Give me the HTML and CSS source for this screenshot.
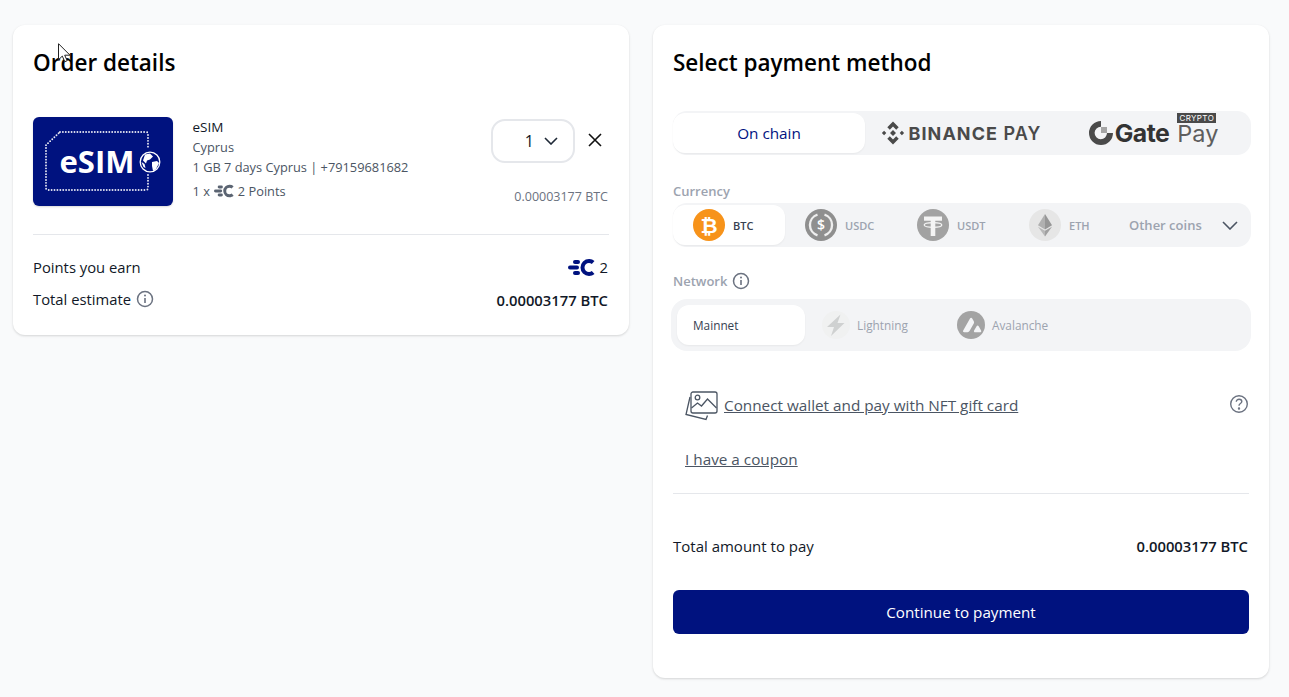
FILE: index.html
```html
<!DOCTYPE html>
<html lang="en">
<head>
<meta charset="utf-8">
<title>Checkout</title>
<link rel="stylesheet" href="styles.css">
</head>
<body>
<svg class="cursor" width="13" height="20" viewBox="0 0 13 20"><path d="M.5.7v16l3.8-3.6 2.5 5.6 2.4-1-2.500-5.500h5.300z" fill="#fff" stroke="#222" stroke-width="1"/></svg>
<main class="page">
  <section class="card order">
    <h2 class="title">Order details</h2>
    <div class="item">
      <div class="thumb">
        <svg width="140" height="89" viewBox="0 0 140 89">
          <path d="M27 15H113Q115 15 115 17V32M115 58V71Q115 73 113 73H15Q13 73 13 71V28L27 15" fill="none" stroke="#fff" stroke-width="1.900" stroke-linecap="round" stroke-dasharray="0 2.900" opacity=".9"/>
          <text x="26.500" y="56" class="esim-text">eSIM</text>
          <circle cx="117" cy="45" r="9.800" fill="none" stroke="#fff" stroke-width="1.300"/>
          <path d="M112 37.500l5-1 3 3-3 3-3 1-1 3-3-3zM119 45l5-1 2 2-3 6-3 2-1-5zM108.500 45l3 2 1 4-2-1z" fill="#fff"/>
        </svg>
      </div>
      <div class="item-info">
        <div class="item-name">eSIM</div>
        <div class="item-line">Cyprus</div>
        <div class="item-line">1 GB 7 days Cyprus | +79159681682</div>
        <div class="item-points">1 x
          <svg class="c-logo" width="20" height="14" viewBox="0 0 27 17" fill="#5b6472"><use href="#clogo"/></svg>
          2 Points</div>
      </div>
      <div class="item-side">
        <div class="qty-row">
          <div class="qty"><span>1</span>
            <svg width="14" height="8" viewBox="0 0 14 8" fill="none" stroke="#1f2937" stroke-width="1.600"><path d="M1 1l6 6 6-6"/></svg>
          </div>
          <svg class="close" width="14" height="14" viewBox="0 0 14 14" fill="none" stroke="#111" stroke-width="1.600"><path d="M1 1l12 12M13 1L1 13"/></svg>
        </div>
        <div class="item-price">0.00003177 BTC</div>
      </div>
    </div>
    <div class="summary">
      <div class="sum-row">
        <span>Points you earn</span>
        <span class="pts">
          <svg width="27" height="17" viewBox="0 0 27 17" fill="#00127f">
            <defs><g id="clogo"><rect x="5" y="1" width="7" height="4" rx="2"/><rect x="0" y="6.500" width="11" height="4" rx="2"/><rect x="5" y="12" width="7" height="4" rx="2"/><path d="M21 0a8.500 8.500 0 0 0 0 17c2.200 0 4-.7 5.500-2l-2.700-3a4 4 0 0 1-2.800 1 4.500 4.500 0 0 1 0-9c1.100 0 2 .3 2.800 1l2.700-3A8 8 0 0 0 21 0z"/></g></defs>
            <use href="#clogo"/>
          </svg>
          <span>2</span>
        </span>
      </div>
      <div class="sum-row">
        <span class="with-info">Total estimate
          <svg class="info" width="18" height="18" viewBox="0 0 18 18"><use href="#info"/></svg>
        </span>
        <strong class="low">0.00003177 BTC</strong>
      </div>
    </div>
  </section>

  <section class="card pay">
    <h2 class="title">Select payment method</h2>

    <div class="tabs">
      <div class="tab active">On chain</div>
      <div class="tab binance">
        <svg width="24" height="24" viewBox="0 0 24 24" fill="#4a4a4a"><path d="M12 .5l5.700 5.700-2.500 2.500L12 5.500 8.800 8.700 6.300 6.200zM12 9l3 3-3 3-3-3zM3.100 9.800L5.300 12l-2.200 2.200L.9 12zM20.900 9.800l2.200 2.200-2.200 2.200-2.200-2.200zM6.300 17.800l2.500-2.500 3.200 3.200 3.200-3.200 2.500 2.500-5.700 5.700z"/></svg>
        <span><b class="bn">BINANCE</b> PAY</span>
      </div>
      <div class="tab gate">
        <svg width="26" height="26" viewBox="0 0 26 26"><path d="M13 1a12 12 0 1 0 12 12h-6a6.200 6.200 0 1 1-6-6.200z" fill="#4a4a4a"/><rect x="13" y="7" width="6" height="6" fill="#a5a5a5"/></svg>
        <span class="gate-word">Gate</span>
        <span class="gate-pay"><span class="crypto">CRYPTO</span><span class="pay-word">Pay</span></span>
      </div>
    </div>

    <div class="label">Currency</div>
    <div class="coins">
      <div class="coin active">
        <svg width="32" height="32" viewBox="0 0 32 32"><circle cx="16" cy="16" r="16" fill="#f7931a"/><text x="16" y="23.500" class="coin-glyph">₿</text></svg>
        <span>BTC</span>
      </div>
      <div class="coin">
        <svg width="32" height="32" viewBox="0 0 32 32"><circle cx="16" cy="16" r="16" fill="#8f8f8f"/><path d="M12.500 5.700a10.800 10.800 0 0 0 0 20.600M19.500 5.700a10.800 10.800 0 0 1 0 20.600" fill="none" stroke="#eee" stroke-width="2.400"/><text x="16" y="21" class="coin-glyph small">$</text></svg>
        <span>USDC</span>
      </div>
      <div class="coin">
        <svg width="32" height="32" viewBox="0 0 32 32"><circle cx="16" cy="16" r="16" fill="#a2a2a2"/><path d="M7 7.500h18v4.200h-6.700V27h-4.600V11.700H7z" fill="#f4f4f4"/><ellipse cx="16" cy="16" rx="8.800" ry="2.300" fill="none" stroke="#f4f4f4" stroke-width="1.300"/></svg>
        <span>USDT</span>
      </div>
      <div class="coin">
        <svg width="32" height="32" viewBox="0 0 32 32"><circle cx="16" cy="16" r="16" fill="#e6e6e6"/><path d="M16 5l-7 11.300 7 4.100z" fill="#b0b0b0"/><path d="M16 5l7 11.300-7 4.100z" fill="#969696"/><path d="M9 17.700l7 9.800v-5.700z" fill="#b8b8b8"/><path d="M23 17.700l-7 9.800v-5.700z" fill="#a0a0a0"/></svg>
        <span>ETH</span>
      </div>
      <div class="other">
        <span>Other coins</span>
        <svg width="16" height="9" viewBox="0 0 16 9" fill="none" stroke="#4b5563" stroke-width="1.600"><path d="M1 1l7 7 7-7"/></svg>
      </div>
    </div>

    <div class="label with-info">Network
      <svg class="info" width="18" height="18" viewBox="0 0 18 18">
        <defs><g id="info"><circle cx="9" cy="9" r="7.500" fill="none" stroke="#6b7280" stroke-width="1.500"/><rect x="8.200" y="8" width="1.600" height="5" fill="#6b7280"/><circle cx="9" cy="5.600" r="1" fill="#6b7280"/></g></defs>
        <use href="#info"/>
      </svg>
    </div>
    <div class="nets">
      <div class="net active">Mainnet</div>
      <div class="net">
        <svg width="28" height="28" viewBox="0 0 28 28"><circle cx="14" cy="14" r="14" fill="#f0f1f1"/><path d="M18.500 3.500L5 16h7l-3 9 13.500-13h-7z" fill="#cfd1d1"/></svg>
        <span>Lightning</span>
      </div>
      <div class="net">
        <svg width="28" height="28" viewBox="0 0 28 28"><circle cx="14" cy="14" r="14" fill="#a3a3a3"/><path d="M13 7.500c.6-1 1.600-1 2.200 0l1.600 2.800c.4.800.4 1.500 0 2.300l-4.300 7.500c-.4.700-1 1.100-1.900 1.100H7.300c-1.100 0-1.600-.8-1.100-1.700zM19.600 15.300c.6-1 1.500-1 2.100 0l2.400 4.100c.5 1-.1 1.900-1.100 1.900h-4.800c-1.100 0-1.600-.9-1.100-1.900z" fill="#f3f4f6"/></svg>
        <span>Avalanche</span>
      </div>
    </div>

    <div class="nft">
      <svg width="33" height="30" viewBox="0 0 33 30" fill="none" stroke="#4b5563" stroke-width="1.300"><rect x="6" y="1" width="26" height="21" rx="2"/><circle cx="12.500" cy="6.500" r="2.300"/><path d="M6.500 17l6-5 4 3 6-7 9 9"/><path d="M5 6L1 23.500l20 5 1.500-4"/></svg>
      <a class="link">Connect wallet and pay with NFT gift card</a>
      <svg class="help" width="20" height="20" viewBox="0 0 20 20" fill="none" stroke="#6b7280" stroke-width="1.400"><circle cx="10" cy="10" r="8.300"/><path d="M7.300 7.800c0-1.600 1.200-2.600 2.800-2.600s2.700 1 2.700 2.300c0 2-2.800 2-2.800 4.200"/><circle cx="10" cy="14.500" r=".5" fill="#6b7280"/></svg>
    </div>
    <a class="link coupon">I have a coupon</a>

    <div class="total">
      <span class="total-label">Total amount to pay</span>
      <strong>0.00003177 BTC</strong>
    </div>
    <button class="cta">Continue to payment</button>
  </section>
</main>
</body>
</html>
```

FILE: styles.css
```css
* { box-sizing: border-box; }
html, body { margin: 0; height: 100%; }
body {
  background: #f9fafb;
  font-family: "Open Sans", "Noto Sans", sans-serif;
  color: #111827;
  overflow: hidden;
}
.cursor { position: absolute; left: 58px; top: 43px; z-index: 5; }
.page {
  display: grid;
  grid-template-columns: 616px 616px;
  gap: 24px;
  padding: 25px 0 0 13px;
  align-items: start;
}
.card {
  background: #fff;
  border-radius: 12px;
  padding: 20px;
  box-shadow: 0 1px 3px rgba(0,0,0,.1), 0 1px 2px rgba(0,0,0,.06);
}
.title { margin: 0; font-size: 22.500px; line-height: 35px; font-weight: 600; color: #000; }
.order { height: 310px; }
.item { display: flex; margin-top: 37px; height: 89px; }
.thumb { width: 140px; height: 89px; background: #00127f; border-radius: 6px; overflow: hidden; box-shadow: 0 1px 2px rgba(0,0,0,.15); }
.thumb svg { display: block; }
.esim-text { font: 700 31px "Open Sans", sans-serif; fill: #fff; }
.item-info { margin-left: 19.500px; flex: 1; font-size: 12.800px; color: #4b5563; }
.item-name { font-size: 13.500px; line-height: 20px; font-weight: 500; color: #111827; }
.item-line { line-height: 20px; }
.item-points { display: flex; align-items: center; gap: 4px; line-height: 20px; margin-top: 4px; }
.item-side { display: flex; flex-direction: column; align-items: flex-end; width: 160px; padding-right: 1px; }
.qty-row { display: flex; align-items: center; gap: 13px; margin-top: 2px; }
.qty { width: 84px; height: 44px; border: 2px solid #e5e7eb; border-radius: 14px; display: flex; align-items: center; justify-content: flex-end; gap: 10px; padding-right: 15px; font-size: 16px; }
.close { margin-right: 6px; margin-top: -2px; }
.item-price { font-size: 12.500px; color: #6b7280; margin-top: 24px; line-height: 20px; }
.summary { border-top: 1px solid #e5e7eb; margin-top: 28px; padding-top: 20px; font-size: 14.800px; }
.sum-row { display: flex; justify-content: space-between; align-items: center; height: 24px; margin-bottom: 8px; }
.sum-row strong, .total strong { font-weight: 600; margin-right: 1px; }
.low { margin-top: 2px; }
.pts { display: flex; align-items: center; gap: 5px; font-weight: 500; margin-right: 1px; }
.with-info { display: flex; align-items: center; gap: 5px; }
.pay { height: 653px; }
.tabs { display: flex; align-items: center; height: 44px; margin-top: 31px; width: 578px; background: #f3f4f6; border-radius: 14px; }
.tab { height: 40px; display: flex; align-items: center; justify-content: center; }
.tab.active { width: 192px; background: #fff; border-radius: 12px; font-size: 15.300px; color: #00127f; font-weight: 500; box-shadow: 0 1px 2px rgba(0,0,0,.05); }
.binance { width: 192px; gap: 4px; }
.binance span { font: 600 18px "Inter", sans-serif; letter-spacing: 1.050px; color: #4a4a4a; white-space: nowrap; }
.bn { font-weight: 700; }
.gate { flex: 1; gap: 1px; padding-right: 4px; }
.gate-word { font: 700 24.800px "Inter", sans-serif; color: #333; letter-spacing: -.5px; }
.gate-pay { display: flex; flex-direction: column; margin: -8px 0 0 7px; width: 39px; font-family: "Inter", sans-serif; }
.crypto { display: block; background: #4a4a4a; color: #fff; font-size: 8px; line-height: 10px; letter-spacing: .4px; text-align: center; white-space: nowrap; }
.pay-word { display: block; font-size: 23.500px; line-height: 22px; color: #5e5e5e; text-align: center; }
.label { font-size: 13px; font-weight: 600; color: #9ca3af; line-height: 20px; margin-top: 26px; }
.coins { display: flex; align-items: center; height: 44px; margin-top: 2px; width: 578px; background: #f3f4f6; border-radius: 14px; }
.coin { width: 112px; height: 40px; display: flex; align-items: center; gap: 8px; padding-left: 20px; font-size: 11px; color: #9ca3af; font-weight: 600; }
.coin.active { background: #fff; border-radius: 12px; color: #374151; box-shadow: 0 1px 2px rgba(0,0,0,.05); }
.coin-glyph { font: 700 21px "DejaVu Sans", sans-serif; fill: #fff; text-anchor: middle; }
.coin-glyph.small { font: 600 14px "Open Sans", sans-serif; }
.other { flex: 1; display: flex; align-items: center; justify-content: space-between; padding: 0 13px 0 8px; font-size: 13px; color: #9ca3af; font-weight: 600; }
.label.with-info { margin-top: 24px; height: 20px; }
.nets { display: flex; align-items: center; height: 52px; width: 580px; margin: 8px 0 0 -2px; padding: 0 6px; background: #f3f4f6; border-radius: 16px; }
.net { height: 40px; display: flex; align-items: center; gap: 7px; margin-left: 17px; width: 118px; font-size: 11.800px; font-weight: 500; color: #9ca3af; }
.net.active { margin-left: 0; width: 128px; padding-left: 16px; background: #fff; border-radius: 12px; color: #374151; box-shadow: 0 1px 2px rgba(0,0,0,.05); }
.nft { display: flex; align-items: center; gap: 6px; margin: 40px 0 0 12px; position: relative; height: 30px; width: 564px; }
.nft .link { margin-bottom: 2px; }
.link { font-size: 15.300px; color: #4b5563; text-decoration: underline; }
.help { position: absolute; right: 0; top: 3px; }
.coupon { display: block; margin: 28px 0 0 12px; line-height: 20px; }
.total { display: flex; justify-content: space-between; align-items: center; border-top: 1px solid #e5e7eb; margin-top: 24px; height: 97px; width: 576px; font-size: 14.800px; padding-top: 8px; }
.total-label { font-size: 15px; }
.cta { display: block; width: 576px; height: 44px; background: #00127f; color: #fff; border: 0; border-radius: 6px; font: 500 15.200px "Open Sans", sans-serif; }
```
